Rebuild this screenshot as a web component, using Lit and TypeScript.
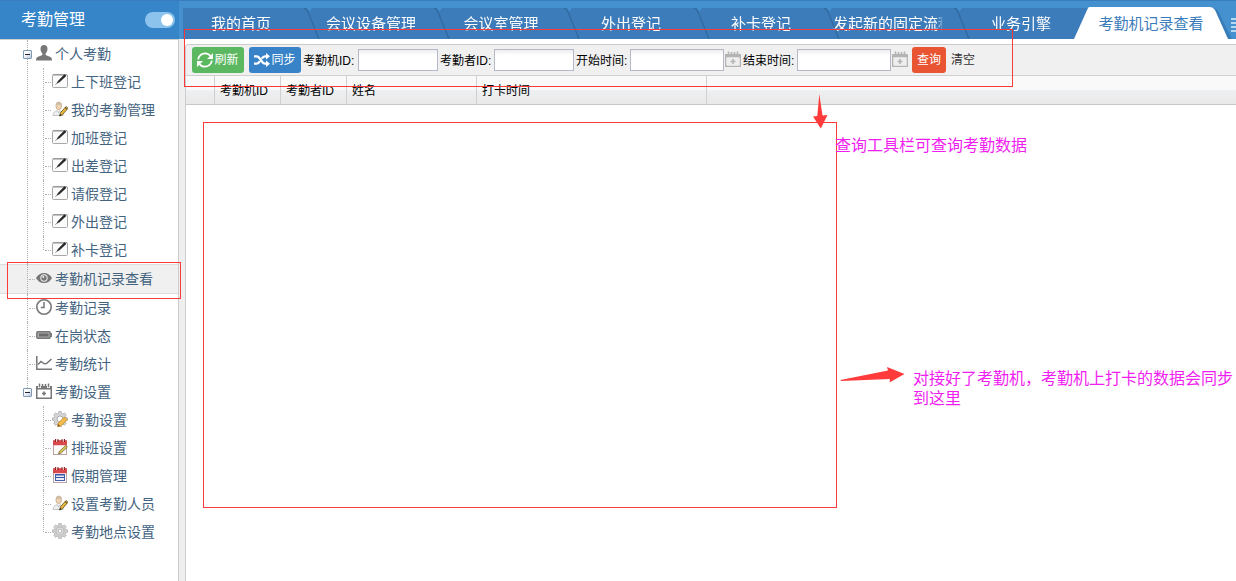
import { LitElement, html, svg, css, nothing, TemplateResult } from "lit";
import { customElement, state } from "lit/decorators.js";
import { classMap } from "lit/directives/class-map.js";

interface Item {
  text: string;
  icon: string;
  active?: boolean;
  children?: Item[];
}

const MENU: Item[] = [
  {
    text: "个人考勤",
    icon: "user",
    children: [
      { text: "上下班登记", icon: "edit" },
      { text: "我的考勤管理", icon: "userEdit" },
      { text: "加班登记", icon: "edit" },
      { text: "出差登记", icon: "edit" },
      { text: "请假登记", icon: "edit" },
      { text: "外出登记", icon: "edit" },
      { text: "补卡登记", icon: "edit" },
    ],
  },
  { text: "考勤机记录查看", icon: "eye", active: true },
  { text: "考勤记录", icon: "clock" },
  { text: "在岗状态", icon: "battery" },
  { text: "考勤统计", icon: "chart" },
  {
    text: "考勤设置",
    icon: "calendar",
    children: [
      { text: "考勤设置", icon: "gearEdit" },
      { text: "排班设置", icon: "calEdit" },
      { text: "假期管理", icon: "calRed" },
      { text: "设置考勤人员", icon: "userEdit" },
      { text: "考勤地点设置", icon: "gear" },
    ],
  },
];

const TABS = [
  "我的首页",
  "会议设备管理",
  "会议室管理",
  "外出登记",
  "补卡登记",
  "发起新的固定流程",
  "业务引擎",
  "考勤机记录查看",
];

const COLUMNS = ["", "考勤机ID", "考勤者ID", "姓名", "打卡时间", ""];

const GEAR =
  "M6.8 0.6h2.4l.4 1.9 1.3.5 1.6-1 1.7 1.7-1 1.6.5 1.3 1.9.4v2.2l-1.9.4-.5 1.3 1 1.6-1.7 1.7-1.6-1-1.3.5-.4 1.9H6.8l-.4-1.9-1.3-.5-1.6 1-1.7-1.7 1-1.6-.5-1.3-1.9-.4V7l1.9-.4.5-1.3-1-1.6 1.7-1.7 1.6 1 1.3-.5z";

const redCalendar = svg`
  <rect x="1.5" y="1.8" width="13" height="13.7" fill="#fdfdfd" stroke="#b9a3a3"/>
  <rect x="1" y="1.3" width="14" height="5" rx="1" fill="#d9484c"/>
  <path d="M3.5 0v3M6 0v3M10 0v3M12.500 0v3" stroke="#8d2227" stroke-width="1"/>
  <path d="M4.500 0v3M11.300 0v3" stroke="#f6c9c9" stroke-width="1"/>`;

const pencil = svg`
  <path d="M7.500 15l1-3.300 5.500-6.200 2 1.800-5.600 6.400z" fill="#e9b93c" stroke="#5f4a1a" stroke-width=".8"/>
  <path d="M7.500 15l.7-2 1.400 1.200z" fill="#222"/>
  <path d="M13 6.500l1.900 1.700" stroke="#333" stroke-width="1"/>`;

const ICONS: Record<string, TemplateResult> = {
  user: svg`<path fill="#777" d="M8 0c2.200 0 3.500 1.500 3.500 3.800 0 1.900-.8 3.700-1.900 4.600v1.300c.3.800 5.200 1.700 6 3.500.3.700.4 1.600.4 2.300H0c0-.7.1-1.600.4-2.300.8-1.800 5.700-2.700 6-3.500V8.400C5.300 7.500 4.500 5.700 4.500 3.800 4.500 1.500 5.800 0 8 0z"/>`,
  edit: svg`
    <rect x=".5" y="1.500" width="15" height="13" rx="1" fill="#fbfbfb" stroke="#a8a8a8"/>
    <path d="M1 2h14" stroke="#8d8d8d"/>
    <path d="M5 10.200l1.200-2.300 6.300-6.300 1.500 1.400-6.500 6z" fill="#262626" stroke="#262626" stroke-width=".5"/>
    <path d="M3.600 11.600l1.300-1.400" stroke="#777"/>`,
  userEdit: svg`
    <path d="M1 14.500c0-3 2-4.600 4.500-4.800L6.500 12l1-2.300c2.200.2 3.700 1.800 3.700 4.800z" fill="#eef0f2" stroke="#b9b9b9" stroke-width=".8"/>
    <ellipse cx="6.700" cy="5" rx="2.800" ry="3.700" fill="#f1d3b3" stroke="#bda27f" stroke-width=".7"/>
    <path d="M3.900 4.500C3.600 1.800 5 .6 7 .8c2 .1 3 1.500 2.600 3.700C8.500 3.600 6 3.200 3.900 4.500z" fill="#cdbda4"/>
    ${pencil}`,
  eye: svg`
    <path fill="#777" fill-rule="evenodd" d="M8 3c3.600 0 6.500 2 8 5-1.500 3-4.400 5-8 5S1.500 11 0 8c1.500-3 4.400-5 8-5zm0 1.300a3.700 3.700 0 100 7.400 3.700 3.700 0 000-7.400z"/>
    <circle cx="8" cy="8" r="2.700" fill="#777"/>
    <circle cx="7.300" cy="7" r="1" fill="#f0f0f0"/>`,
  clock: svg`
    <circle cx="8" cy="8" r="7.200" fill="none" stroke="#777" stroke-width="1.600"/>
    <path d="M8 3v5.500H4.800" fill="none" stroke="#777" stroke-width="1.500"/>`,
  battery: svg`
    <rect x=".8" y="4.800" width="13.400" height="6.400" rx="1" fill="#aaa" stroke="#777" stroke-width="1.500"/>
    <rect x="3" y="6.500" width="9.500" height="3" fill="#6c6c6c"/>
    <path d="M15.300 6v4" stroke="#777" stroke-width="1.300"/>`,
  chart: svg`
    <path d="M.8 1v13.300H16" fill="none" stroke="#777" stroke-width="1.500"/>
    <path d="M2 9.500L5 6.500l3.300 2.300 2.200-.2L15.500 4" fill="none" stroke="#777" stroke-width="1.500"/>`,
  calendar: svg`
    <path fill="#777" fill-rule="evenodd" d="M0 3h2v2h3V3h6v2h3V3h2v13H0zm1.500 3.500v8h13v-8z"/>
    <path d="M3.500.5v3.800M12.500.5v3.800M6.500 1v2M9.500 1v2" stroke="#777" stroke-width="1.500"/>
    <path d="M8 8.500v4M6 10.500h4" stroke="#777" stroke-width="1.600"/>`,
  gearEdit: svg`
    <path d="${GEAR}" fill="#d4d6d8" stroke="#a2a4a6" stroke-width=".7"/>
    <circle cx="8" cy="8" r="3" fill="#fff" stroke="#999" stroke-width=".8"/>
    <path d="M5.500 15.500l.8-3.500 6-6 3 2.500-6 6.300z" fill="#f2bd4c" stroke="#c98b2b" stroke-width=".8"/>
    <path d="M5.500 15.500l.6-2.300 1.900 1.600z" fill="#7b4a22"/>`,
  calEdit: svg`${redCalendar}
    <path d="M6.500 15l.8-2.600 6.400-6 1.700 1.700-6.300 6z" fill="#d8c453" stroke="#66602c" stroke-width=".7"/>`,
  calRed: svg`${redCalendar}
    <rect x="3.500" y="7.500" width="9" height="6" fill="#e9edf8" stroke="#4860a8"/>
    <path d="M3.500 8h9M3.500 10.500h9" stroke="#3450a0"/>`,
  gear: svg`
    <path d="${GEAR}" fill="#cfcfcf" stroke="#ababab" stroke-width=".7"/>
    <circle cx="8" cy="8" r="4" fill="#dedede" stroke="#b5b5b5" stroke-width=".8"/>
    <circle cx="8" cy="8" r="1.800" fill="#fff" stroke="#a8a8a8" stroke-width=".8"/>`,
  refresh: svg`
    <path d="M1.200 7.500C1.500 4 4.500 1.300 8 1.300c2.300 0 4.200 1.100 5.400 2.800M14.800 8.500c-.3 3.500-3.300 6.200-6.800 6.200-2.300 0-4.200-1.100-5.400-2.800" fill="none" stroke="#fff" stroke-width="1.800"/>
    <path d="M16 1v6h-6zM0 15V9h6z" fill="#fff"/>`,
  shuffle: svg`
    <path d="M0 4.300h2.800c3.400 0 4.600 7.400 8.200 7.400h1.500M0 11.700h2.800c1.300 0 2.300-1.200 3.100-2.600M7.800 6.600C8.600 5.300 9.500 4.300 11 4.300h1.500" fill="none" stroke="#fff" stroke-width="2.200"/>
    <path d="M12 1l4 3.300-4 3.300zM12 8.400l4 3.300-4 3.300z" fill="#fff"/>`,
  picker: svg`
    <path fill="#b4b4b4" fill-rule="evenodd" d="M0 3h16v13H0zm1.500 3.500v8h13v-8z"/>
    <path d="M1.500 6.500h13v8h-13z" fill="#eee"/>
    <path d="M3.500.5v4M12.500.5v4M6.500 1v2M9.500 1v2" stroke="#b4b4b4" stroke-width="1.600"/>
    <path d="M8 8v5M5.500 10.500h5" stroke="#b4b4b4" stroke-width="1.600"/>`,
};

const icon = (name: string) =>
  html`<svg class="icon" viewBox="0 0 16 16" aria-hidden="true">${ICONS[name]}</svg>`;

@customElement("app-root")
export class AppRoot extends LitElement {
  @state() private closed = new Set<Item>();

  static styles = css`
    :host {
      display: block;
      position: relative;
      overflow: hidden;
      min-height: 100vh;
      background: #fff;
      color: #000;
      font: 12px/16px "Liberation Sans", "Noto Sans CJK SC", sans-serif;
    }
    *,
    *::before,
    *::after {
      box-sizing: border-box;
    }
    ul {
      margin: 0;
      padding: 0;
      list-style: none;
    }
    a {
      color: inherit;
      text-decoration: none;
    }
    button {
      font: inherit;
      border: 0;
      padding: 0;
      cursor: pointer;
    }
    .icon {
      flex: none;
      width: 16px;
      height: 16px;
      display: block;
    }
    .shell {
      display: flex;
      min-height: 100vh;
    }
    .side {
      flex: none;
      width: 179px;
      display: flex;
      flex-direction: column;
    }
    .side-head {
      display: flex;
      align-items: center;
      justify-content: space-between;
      height: 39px;
      padding: 0 4px 0 21px;
      border-top: 1px solid #3a7dbd;
      background: #3585c8;
      color: #fff;
    }
    .side-head h1 {
      margin: 0;
      font-size: 16px;
      font-weight: 400;
      line-height: 24px;
    }
    .switch {
      appearance: none;
      display: flex;
      align-items: center;
      margin: 0;
      width: 30px;
      height: 16px;
      padding: 0 2px;
      border-radius: 8px;
      background: #8cc3ec;
    }
    .switch::before {
      content: "";
      width: 12px;
      height: 12px;
      border-radius: 50%;
      background: #fff;
    }
    .switch:checked::before {
      margin-left: auto;
    }
    .tree {
      flex: 1;
      border-top: 1px solid #d0d0d0;
      border-right: 1px solid #ccc;
      color: #43637f;
      font-size: 14px;
    }
    .tree li {
      position: relative;
    }
    .tree li::before {
      content: "";
      position: absolute;
      z-index: 1;
      left: 27px;
      top: 0;
      bottom: 0;
      border-left: 1px dotted #b0b0b0;
    }
    .tree li li::before {
      left: 43px;
    }
    .tree li:last-child::before {
      bottom: auto;
      height: 14px;
    }
    .row {
      display: flex;
      align-items: center;
      height: 28px;
      padding-left: 23px;
    }
    li li .row {
      padding-left: 39px;
    }
    .row.active {
      height: 30px;
      background: #f0f0f0;
      border: solid #ddd;
      border-width: 1px 0;
    }
    .row a {
      display: flex;
      align-items: center;
      gap: 3px;
      line-height: 20px;
      white-space: nowrap;
    }
    .row .icon,
    .pick .icon {
      margin-bottom: 2px;
    }
    .slot {
      flex: none;
      width: 13px;
      padding-left: 6px;
    }
    .slot::before {
      content: "";
      display: block;
      width: 6px;
      border-top: 1px dotted #b0b0b0;
    }
    .fold {
      position: relative;
      z-index: 2;
      flex: none;
      display: grid;
      place-items: center;
      width: 9px;
      height: 9px;
      margin-right: 4px;
      border: 1px solid #8299b3;
      border-radius: 1px;
      background: linear-gradient(135deg, #fff 30%, #bccbdc);
    }
    .fold svg {
      width: 5px;
      height: 5px;
      display: block;
    }
    .main {
      flex: 1;
      min-width: 0;
      display: flex;
      flex-direction: column;
    }
    .tabs {
      display: flex;
      height: 39px;
      padding: 7px 0 0 4px;
      overflow: hidden;
      border-top: 1px solid #3a7dbd;
      background: #4591cf;
      color: #fff;
      font-size: 15px;
    }
    .tab {
      position: relative;
      flex: none;
      width: 130px;
      padding: 0 14px 0 0;
      background: #3c7cbb;
      text-align: center;
      line-height: 32px;
    }
    .tab a {
      display: block;
      overflow: hidden;
      white-space: nowrap;
      mask-image: linear-gradient(90deg, #000 104px, transparent 110px);
    }
    .tab.on {
      color: #3b7cba;
      background: none;
    }
    .tab.on a {
      position: relative;
      overflow: visible;
      mask-image: none;
    }
    .slash {
      position: absolute;
      right: -7px;
      top: 0;
      width: 16px;
      height: 31px;
      z-index: 1;
    }
    .shape {
      position: absolute;
      left: -19px;
      top: -1px;
      width: 158px;
      height: 32px;
      z-index: 0;
    }
    .more {
      display: block;
      flex: none;
      width: 13px;
      height: 31px;
      margin-left: 8px;
      background: none;
    }
    .more svg {
      display: block;
    }
    .split {
      flex: 1;
      display: flex;
      flex-direction: column;
      background: linear-gradient(90deg, #efefef 6px, #fff 6px);
    }
    .body {
      flex: 1;
      display: flex;
      flex-direction: column;
      margin-top: 5px;
      margin-left: 6px;
      border: solid #ccc;
      border-width: 1px 0 0 1px;
      border-top-left-radius: 4px;
      background: #fff;
    }
    .bar {
      display: flex;
      align-items: center;
      height: 31px;
      padding: 0 6px;
      background: #f0f0f0;
      border-bottom: 1px solid #d0d0d0;
      border-top-left-radius: 4px;
      white-space: nowrap;
    }
    .btn {
      display: flex;
      align-items: center;
      justify-content: center;
      gap: 1px;
      height: 26px;
      padding: 0 5px;
      border-radius: 3px;
      color: #fff;
    }
    .green {
      width: 52px;
      margin-right: 5px;
      background: #5cb860;
    }
    .blue {
      width: 52px;
      margin-right: 2px;
      background: #3883c7;
    }
    .red {
      margin-left: 2px;
      background: #e95433;
    }
    .plain {
      color: #333;
      background: none;
    }
    .field {
      display: flex;
      align-items: center;
      margin-right: 2px;
    }
    .field label {
      width: 55px;
      padding-top: 2px;
    }
    .field label.wide {
      width: 54px;
    }
    .field input {
      width: 80px;
      height: 22px;
      margin: 0;
      padding: 1px 3px;
      border: 1px solid #b5b8c8;
      background: linear-gradient(#ececec, #fff 5px);
      font: inherit;
    }
    .field .date {
      width: 94px;
    }
    .pick {
      margin-left: 1px;
      background: none;
    }
    table {
      width: 100%;
      table-layout: fixed;
      border-collapse: separate;
      border-spacing: 0;
    }
    .c0 {
      width: 29px;
    }
    .c1,
    .c2 {
      width: 66px;
    }
    .c3 {
      width: 130px;
    }
    .c4 {
      width: 230px;
    }
    th {
      height: 29px;
      padding: 2px 5px 0;
      border-bottom: 1px solid #c8c8c8;
      border-right: 1px solid #d0d0d0;
      background: linear-gradient(#f9f9f9 50%, #eef0f1 50%, #e9e9e9);
      font-weight: 400;
      text-align: left;
      white-space: nowrap;
    }
    th:last-child {
      border-right: 0;
    }
    .box {
      position: absolute;
      z-index: 3;
      border: 1px solid #fb3a3a;
      pointer-events: none;
    }
    .box-tools {
      left: 184px;
      top: 29px;
      width: 829px;
      height: 58px;
    }
    .box-data {
      left: 203px;
      top: 122px;
      width: 634px;
      height: 386px;
    }
    .box-menu {
      left: 7px;
      top: 262px;
      width: 174px;
      height: 37px;
    }
    .note {
      position: absolute;
      z-index: 3;
      margin: 0;
      color: #f01ef0;
      font-size: 16px;
      line-height: 20px;
    }
    .note-tools {
      left: 835px;
      top: 136px;
    }
    .note-data {
      left: 913px;
      right: 0;
      top: 369px;
    }
    .arrow {
      position: absolute;
      z-index: 3;
      fill: #ff3b3b;
    }
    .arrow-down {
      left: 813px;
      top: 94px;
    }
    .arrow-right {
      left: 840px;
      top: 366px;
    }
  `;

  private toggle(item: Item) {
    const next = new Set(this.closed);
    next.has(item) ? next.delete(item) : next.add(item);
    this.closed = next;
  }

  private renderItem(item: Item): TemplateResult {
    const open = !this.closed.has(item);
    return html`<li>
      <div class=${classMap({ row: true, active: !!item.active })}>
        ${item.children
          ? html`<button class="fold" aria-label=${item.text} aria-expanded=${open} @click=${() => this.toggle(item)}>
              <svg viewBox="0 0 5 5"><path d=${open ? "M0 2.500h5" : "M0 2.500h5M2.500 0v5"} stroke="#223" /></svg>
            </button>`
          : html`<span class="slot"></span>`}
        <a href="#">${icon(item.icon)}<span>${item.text}</span></a>
      </div>
      ${item.children && open ? html`<ul>${item.children.map((c) => this.renderItem(c))}</ul>` : nothing}
    </li>`;
  }

  private renderTab(text: string, i: number) {
    const on = i === TABS.length - 1;
    return html`<li class=${classMap({ tab: true, on })}>
      ${on
        ? html`<svg class="shape" viewBox="0 0 158 32" aria-hidden="true">
            <path d="M0 1H20V32H0z" fill="#3c7cbb" />
            <path d="M134 1c5 0 6 2 8 5l12 26h4L144 4c-1-2-3-3-6-3z" fill="#2d6ca8" opacity=".55" />
            <path d="M0 32L14 1Q14.500 0 16 0H136Q139 0 141 3L154 32z" fill="#fff" />
          </svg>`
        : nothing}
      <a href="#">${text}</a>
      ${i < TABS.length - 2
        ? html`<svg class="slash" viewBox="0 0 16 31" aria-hidden="true">
            <path d="M0 0Q3 1 4 4L15 31" fill="none" stroke="#2f6496" stroke-width="1.300" opacity=".75" />
            <path d="M3 0h5L5.500 3.500z" fill="#4591cf" />
          </svg>`
        : nothing}
    </li>`;
  }

  render() {
    return html`
      <div class="shell">
        <aside class="side">
          <header class="side-head">
            <h1>考勤管理</h1>
            <input class="switch" type="checkbox" role="switch" aria-label="考勤管理" checked />
          </header>
          <nav class="tree"><ul>${MENU.map((m) => this.renderItem(m))}</ul></nav>
        </aside>
        <main class="main">
          <ul class="tabs">
            ${TABS.map((t, i) => this.renderTab(t, i))}
            <li>
              <button class="more" aria-label="更多">
                <svg width="13" height="31" viewBox="0 0 13 31">
                  <path d="M0 11h13M0 15h13M0 19h13M0 23h13" stroke="#b8d8f0" stroke-width="2" />
                </svg>
              </button>
            </li>
          </ul>
          <div class="split">
            <section class="body">
              <div class="bar">
                <button class="btn green">${icon("refresh")}刷新</button>
                <button class="btn blue">${icon("shuffle")}同步</button>
                <div class="field"><label for="machine">考勤机ID:</label><input id="machine" type="text" /></div>
                <div class="field"><label class="wide" for="person">考勤者ID:</label><input id="person" type="text" /></div>
                <div class="field">
                  <label class="wide" for="from">开始时间:</label><input class="date" id="from" type="text" />
                  <button class="pick" aria-label="开始时间">${icon("picker")}</button>
                </div>
                <div class="field">
                  <label class="wide" for="to">结束时间:</label><input class="date" id="to" type="text" />
                  <button class="pick" aria-label="结束时间">${icon("picker")}</button>
                </div>
                <button class="btn red">查询</button>
                <button class="btn plain">清空</button>
              </div>
              <table>
                <colgroup>
                  ${COLUMNS.map((_, i) => html`<col class="c${i}" />`)}
                </colgroup>
                <thead>
                  <tr>${COLUMNS.map((c) => html`<th scope="col">${c}</th>`)}</tr>
                </thead>
                <tbody></tbody>
              </table>
            </section>
          </div>
        </main>
      </div>
      <div class="box box-tools"></div>
      <div class="box box-data"></div>
      <div class="box box-menu"></div>
      <svg class="arrow arrow-down" width="15" height="35" aria-hidden="true">
        <path d="M6.300 0L9.500 21.500 14.500 21 7.800 34.500 0 22.500 4.300 22z" />
      </svg>
      <p class="note note-tools">查询工具栏可查询考勤数据</p>
      <svg class="arrow arrow-right" width="66" height="18" aria-hidden="true">
        <path d="M.5 14L48 4.500 47 1 64.500 8 49.500 16.500 50 13 1 15z" />
      </svg>
      <p class="note note-data">对接好了考勤机，考勤机上打卡的数据会同步到这里</p>
    `;
  }
}
